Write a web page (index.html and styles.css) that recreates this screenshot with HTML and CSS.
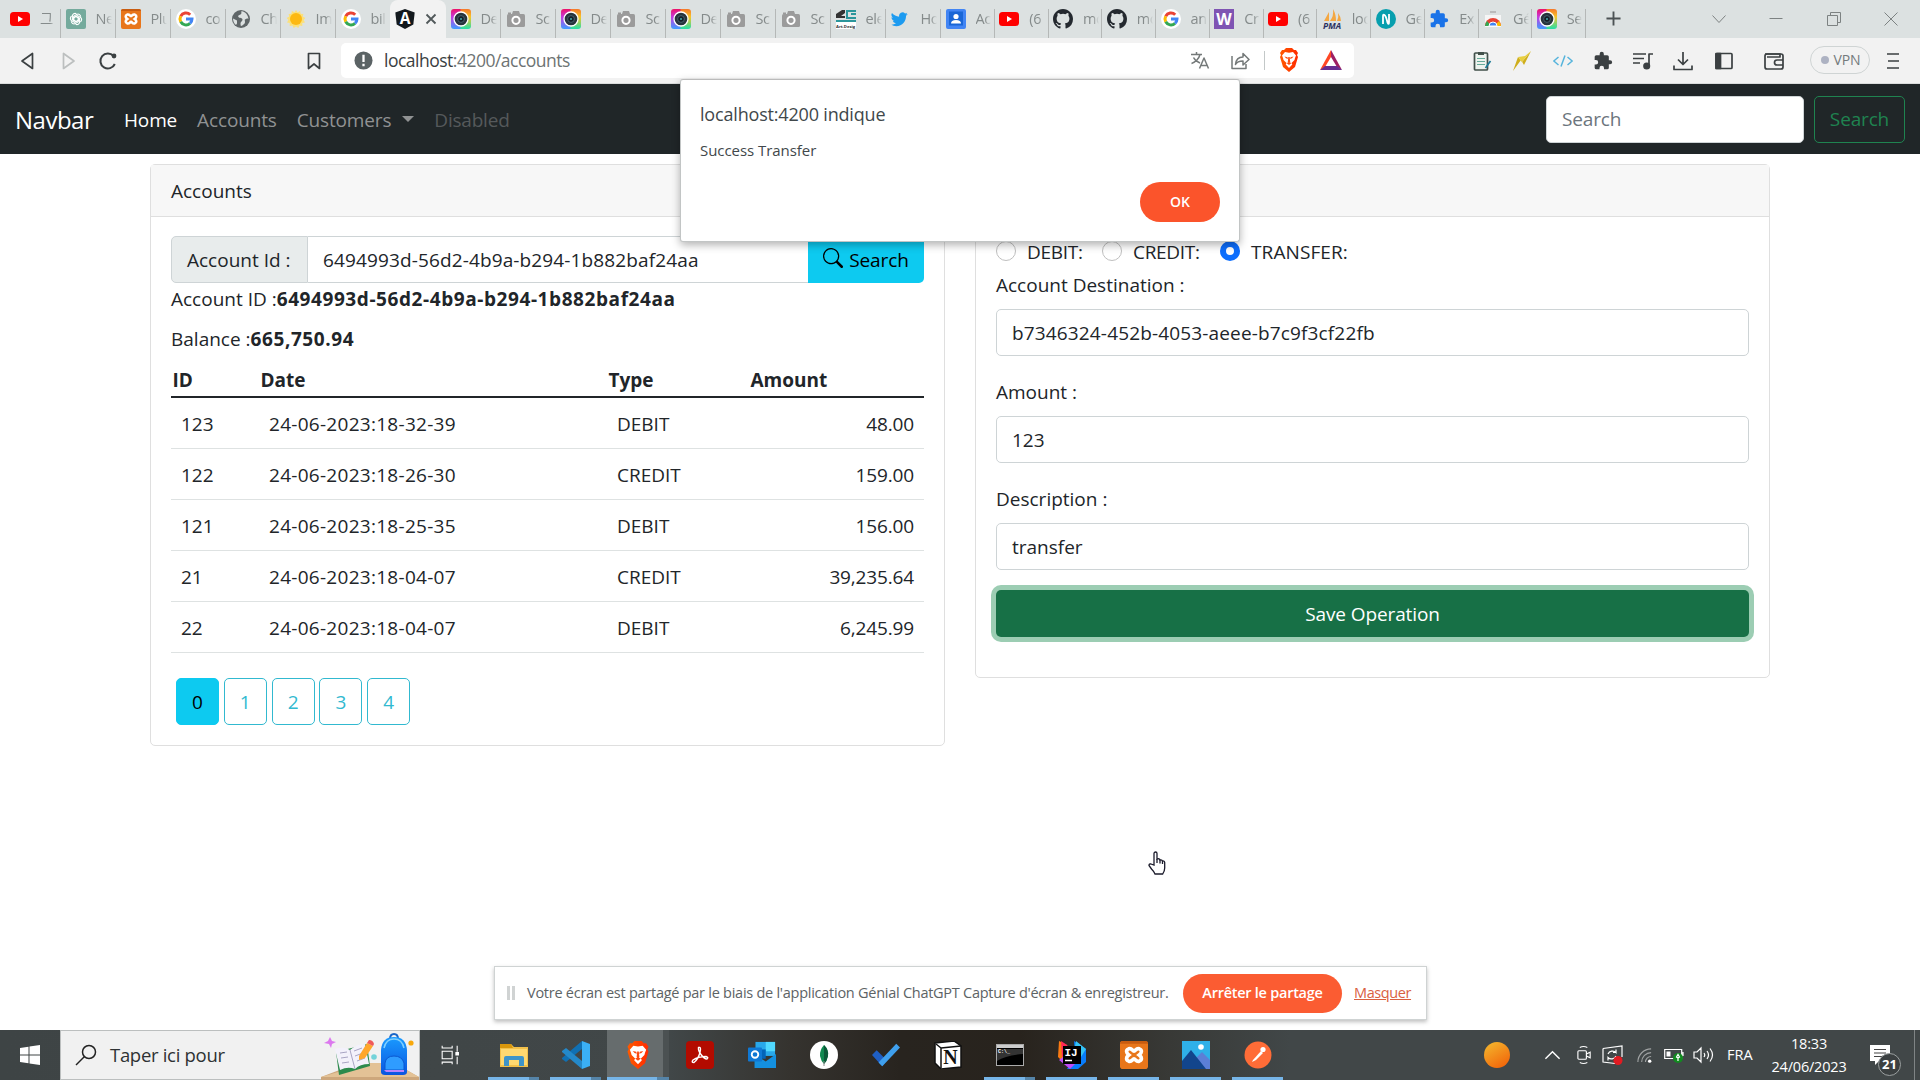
FILE: index.html
```html
<!DOCTYPE html>
<html lang="fr">
<head>
<meta charset="utf-8">
<title>Accounts</title>
<link rel="stylesheet" href="styles.css">
</head>
<body>
<svg class="defs" aria-hidden="true">
  <defs>
    <linearGradient id="rainbow" x1="0" y1="0" x2="0" y2="1"><stop offset="0" stop-color="#ee1166"/><stop offset=".4" stop-color="#c43be0"/><stop offset="1" stop-color="#3f9dff"/></linearGradient>
    <linearGradient id="rainbow2" x1="0" y1="0" x2="0" y2="1"><stop offset="0" stop-color="#f5782a"/><stop offset=".4" stop-color="#f7c52a"/><stop offset="1" stop-color="#22e0a8"/></linearGradient>
    <linearGradient id="sunset" x1="0" y1="0" x2=".6" y2="1"><stop offset="0" stop-color="#f3bb2f"/><stop offset="1" stop-color="#f26a0c"/></linearGradient>
    <linearGradient id="bag" x1="0" y1="0" x2="0" y2="1"><stop offset="0" stop-color="#1a9bff"/><stop offset="1" stop-color="#0a55e0"/></linearGradient>
    <linearGradient id="brave" x1="0" y1="0" x2="1" y2="0"><stop offset="0" stop-color="#ff5a00"/><stop offset="1" stop-color="#ff2a00"/></linearGradient>
    <symbol id="youtube" viewBox="0 0 20 20"><rect y="3" width="20" height="14" rx="3.5" fill="#f00"/><path d="M8 7l5 3-5 3z" fill="#fff"/></symbol>
    <symbol id="gpt" viewBox="0 0 20 20"><rect width="20" height="20" rx="2" fill="#74aa9c"/><g fill="none" stroke="#fff" stroke-width="1.1"><path id="petal" d="M10 7.400l2.300 1.300v4.100l-3 1.800a2.700 2.700 0 0 1-4-2.300"/><use href="#petal" transform="rotate(60 10 10)"/><use href="#petal" transform="rotate(120 10 10)"/><use href="#petal" transform="rotate(180 10 10)"/><use href="#petal" transform="rotate(240 10 10)"/><use href="#petal" transform="rotate(300 10 10)"/></g></symbol>
    <symbol id="xampp" viewBox="0 0 20 20"><rect width="20" height="20" rx="2" fill="#e8761b"/><path d="M0 2q0-2 2-2h16q2 0 2 2z" fill="#c85c10"/><path d="M6.200 5.600c2.400-.7 2.600 1.600 3.800 1.600s1.400-2.300 3.800-1.600c2.200.8 1.800 3-.1 4.400 1.900 1.400 2.300 3.600.1 4.400-2.400.7-2.600-1.600-3.800-1.600s-1.400 2.300-3.800 1.600c-2.200-.8-1.800-3 .1-4.400-1.900-1.400-2.300-3.600-.1-4.400z" fill="none" stroke="#fff" stroke-width="2.600"/></symbol>
    <symbol id="google" viewBox="0 0 20 20"><circle cx="10" cy="10" r="10" fill="#fff"/><g fill="none" stroke-width="3"><path d="M14.200 5.700A6 6 0 0 0 4.700 7.200" stroke="#ea4335"/><path d="M4.700 7.200a6 6 0 0 0 0 5.600" stroke="#fbbc05"/><path d="M4.700 12.800a6 6 0 0 0 9.300 1.600" stroke="#34a853"/><path d="M14 14.400a6 6 0 0 0 2-4.400h-6" stroke="#4285f4"/></g></symbol>
    <symbol id="globe" viewBox="0 0 20 20"><circle cx="10" cy="10" r="9" fill="#5f6668"/><path d="M10.500 2c-.5 2 .5 2.500-1 3.500s-3 1-2 2.500 4 .5 4 2.500-2 2-2 4 .5 2.500.5 2.500 4-1.500 4-4-1-2 1-3 2.500 0 2.500 0-.5-7-7-8zM2 9.500l4 2v3l-1 1.500c-2-1.500-3-4-3-6.500z" fill="#dce1e1"/></symbol>
    <symbol id="sun" viewBox="0 0 20 20"><path d="M10 1l1.600 2.200 2.500-1.200.5 2.700 2.800.2-.6 2.700 2.500 1.300L17.600 11l1.400 2.400-2.700.7v2.800l-2.700-.4-1.300 2.500L10 17.400 7.700 19l-1.300-2.500-2.700.4v-2.800L1 13.400 2.400 11 .7 8.900l2.500-1.300-.6-2.700 2.800-.2.500-2.700 2.500 1.200z" fill="#fbe07a"/><circle cx="10" cy="10" r="6" fill="#fdb913"/></symbol>
    <symbol id="angular" viewBox="0 0 20 20"><path d="M10 0l9.700 3.400-1.400 12.200L10 20l-8.300-4.400L.3 3.400z" fill="#12181d"/><text x="10" y="14.800" text-anchor="middle" class="logo-text" font-size="15.500" fill="#fff">A</text></symbol>
    <symbol id="shot" viewBox="0 0 20 20"><path d="M3 0h7v20H3q-3 0-3-3V3q0-3 3-3z" fill="url(#rainbow)"/><path d="M9.500 0H17q3 0 3 3v14q0 3-3 3H9.500z" fill="url(#rainbow2)"/><circle cx="10" cy="10" r="7" fill="#28343c" stroke="#fff" stroke-width="1.300"/><circle cx="10" cy="10" r="3.400" fill="#152028" stroke="#47606c"/><circle cx="10" cy="10" r="1" fill="#4aa"/></symbol>
    <symbol id="camera" viewBox="0 0 20 20"><rect x="1" y="5" width="18" height="13" rx="1.500" fill="#9b9b9b"/><path d="M6 5l1-3h6l1 3zM2 3.500h3V5H2z" fill="#9b9b9b"/><circle cx="10" cy="11.300" r="3.600" fill="#9b9b9b" stroke="#fff" stroke-width="2"/></symbol>
    <symbol id="design" viewBox="0 0 20 20"><path d="M0 13h20v7H0z" fill="#fff"/><path d="M0 5l6-4h3v3L5 7h4v2H0z" fill="#333"/><path d="M10 2h10M11 1v8h9M15 5h5M0 12h20" fill="none" stroke="#2b969b" stroke-width="2"/><text x="0" y="18.500" class="logo-text" font-size="4.200" fill="#333">Art.Desig</text></symbol>
    <symbol id="twitter" viewBox="0 0 24 24"><path d="M23.600 4.900a9.600 9.600 0 0 1-2.800.8 4.900 4.900 0 0 0 2.100-2.700 9.700 9.700 0 0 1-3.100 1.200 4.900 4.900 0 0 0-8.300 4.500A13.900 13.900 0 0 1 1.400 3.600a4.900 4.900 0 0 0 1.500 6.500 4.900 4.900 0 0 1-2.200-.6 4.900 4.900 0 0 0 3.900 4.900 4.900 4.900 0 0 1-2.200.1 4.900 4.900 0 0 0 4.600 3.400A9.800 9.800 0 0 1 0 19.900a13.900 13.900 0 0 0 7.500 2.200c9.100 0 14-7.500 13.700-14.600a10 10 0 0 0 2.400-2.600z" fill="#1d9bf0"/></symbol>
    <symbol id="contact" viewBox="0 0 20 20"><rect width="20" height="20" rx="2" fill="#4285f4"/><rect x="3" y="2.500" width="14" height="14" fill="#1a66d6"/><circle cx="10" cy="7.500" r="2.600" fill="#fff"/><path d="M5 14.500q0-3.500 5-3.500t5 3.500z" fill="#fff"/></symbol>
    <symbol id="github" viewBox="0 0 16 16"><path d="M8 0C3.580 0 0 3.580 0 8c0 3.540 2.290 6.530 5.470 7.590.4.070.55-.17.55-.38 0-.19-.01-.82-.01-1.490-2.010.37-2.530-.49-2.690-.94-.09-.23-.48-.94-.82-1.130-.28-.15-.68-.52-.01-.53.63-.01 1.080.58 1.230.82.720 1.210 1.870.87 2.330.66.070-.52.280-.87.510-1.070-1.780-.2-3.640-.89-3.640-3.950 0-.87.310-1.590.82-2.150-.08-.2-.36-1.020.08-2.120 0 0 .67-.21 2.200.82a7.500 7.500 0 0 1 4 0c1.530-1.040 2.200-.82 2.200-.82.440 1.100.16 1.920.08 2.120.51.560.82 1.270.82 2.150 0 3.070-1.870 3.750-3.650 3.950.29.250.54.730.54 1.480 0 1.070-.01 1.930-.01 2.200 0 .21.150.46.550.38A8 8 0 0 0 16 8c0-4.420-3.580-8-8-8z" fill="#24292f"/></symbol>
    <symbol id="wlogo" viewBox="0 0 20 20"><rect width="20" height="20" fill="#7f54b3"/><text x="10" y="15.500" text-anchor="middle" class="logo-text" font-size="16" fill="#fff">W</text></symbol>
    <symbol id="pma" viewBox="0 0 20 20"><path d="M2 12L7 3v9zM8 12q4-5 3-12 3 5 3 12zM15 12q2-4 1-8 3 4 3 8z" fill="#f4a742"/><text x="10" y="19.500" text-anchor="middle" class="logo-text italic" font-size="8.500" fill="#2b3060">PMA</text></symbol>
    <symbol id="nlogo" viewBox="0 0 20 20"><circle cx="10" cy="10" r="10" fill="#079fae"/><path d="M7 15V7q0-2 1.500-1t3 7.500q1.500 3 1.500-.5V5" fill="none" stroke="#fff" stroke-width="1.800"/></symbol>
    <symbol id="puzzle" viewBox="0 0 24 24"><path d="M20.500 11H19V7a2 2 0 0 0-2-2h-4V3.500a2.500 2.500 0 0 0-5 0V5H4a2 2 0 0 0-2 2v3.800h1.500a2.700 2.700 0 0 1 0 5.400H2V20a2 2 0 0 0 2 2h3.800v-1.500a2.700 2.700 0 0 1 5.400 0V22H17a2 2 0 0 0 2-2v-4h1.500a2.500 2.500 0 0 0 0-5z" fill="currentColor"/></symbol>
    <symbol id="store" viewBox="0 0 20 20"><path d="M7 2h6v2H7z" fill="#bbb"/><path d="M2 6h16v12H2z" fill="#f6f6f6"/><path d="M2 17a8 8 0 0 1 16 0z" fill="#e84335"/><path d="M2 17a8 8 0 0 1 2-5l4 5z" fill="#34a853"/><path d="M18 17a8 8 0 0 0-2-5l-5 5z" fill="#fbbc05"/><path d="M6 17a4 4 0 0 1 8 0z" fill="#4285f4" stroke="#fff"/></symbol>
    <symbol id="lion" viewBox="0 0 20 24"><path d="M5 2l2-2h6l2 2h2l2 3-1 2 1 2-3 10-6 5-6-5L1 9l1-2-1-2 2-3z" fill="url(#brave)"/><path d="M6 4l4 .8L14 4l3 3.600-1 2.400-.5 2-3 3 .8 1.500L10 20l-3.300-3.500.8-1.500-3-3-.5-2-1-2.400z" fill="#fff"/><path d="M5.500 8.500l3 .8.500 1.700-2-.7zM14.500 8.500l-3 .8-.5 1.700 2-.7zM9.300 9h1.400l.5 5-1.200.8-1.200-.8zM7.500 15l2.500-.8 2.500.8-2.500 2z" fill="#fb4a10"/></symbol>
  </defs>
</svg>

<div class="tabs">
  <div class="tab first"><svg class="fav"><use href="#youtube"/></svg><span>그</span></div>
  <div class="tab"><svg class="fav"><use href="#gpt"/></svg><span>Ne</span></div>
  <div class="tab"><svg class="fav"><use href="#xampp"/></svg><span>Plu</span></div>
  <div class="tab"><svg class="fav"><use href="#google"/></svg><span>co</span></div>
  <div class="tab"><svg class="fav"><use href="#globe"/></svg><span>Ch</span></div>
  <div class="tab"><svg class="fav"><use href="#sun"/></svg><span>Im</span></div>
  <div class="tab last"><svg class="fav"><use href="#google"/></svg><span>bil</span></div>
  <div class="tab active"><svg class="fav"><use href="#angular"/></svg><svg class="close" viewBox="0 0 12 12"><path d="M1.500 1.500l9 9M10.500 1.500l-9 9"/></svg></div>
  <div class="tab"><svg class="fav"><use href="#shot"/></svg><span>De</span></div>
  <div class="tab"><svg class="fav"><use href="#camera"/></svg><span>Sc</span></div>
  <div class="tab"><svg class="fav"><use href="#shot"/></svg><span>De</span></div>
  <div class="tab"><svg class="fav"><use href="#camera"/></svg><span>Sc</span></div>
  <div class="tab"><svg class="fav"><use href="#shot"/></svg><span>De</span></div>
  <div class="tab"><svg class="fav"><use href="#camera"/></svg><span>Sc</span></div>
  <div class="tab"><svg class="fav"><use href="#camera"/></svg><span>Sc</span></div>
  <div class="tab"><svg class="fav"><use href="#design"/></svg><span>ele</span></div>
  <div class="tab"><svg class="fav small"><use href="#twitter"/></svg><span>Ho</span></div>
  <div class="tab narrow"><svg class="fav"><use href="#contact"/></svg><span>Ac</span></div>
  <div class="tab narrow"><svg class="fav"><use href="#youtube"/></svg><span>(6</span></div>
  <div class="tab narrow"><svg class="fav"><use href="#github"/></svg><span>mo</span></div>
  <div class="tab narrow"><svg class="fav"><use href="#github"/></svg><span>mo</span></div>
  <div class="tab narrow"><svg class="fav"><use href="#google"/></svg><span>an</span></div>
  <div class="tab narrow"><svg class="fav"><use href="#wlogo"/></svg><span>Cr</span></div>
  <div class="tab narrow"><svg class="fav"><use href="#youtube"/></svg><span>(6</span></div>
  <div class="tab narrow"><svg class="fav"><use href="#pma"/></svg><span>loc</span></div>
  <div class="tab narrow"><svg class="fav"><use href="#nlogo"/></svg><span>Ge</span></div>
  <div class="tab narrow"><svg class="fav blue"><use href="#puzzle"/></svg><span>Ex</span></div>
  <div class="tab narrow"><svg class="fav"><use href="#store"/></svg><span>Gé</span></div>
  <div class="tab narrow"><svg class="fav"><use href="#shot"/></svg><span>Se</span></div>
  <svg class="plus" viewBox="0 0 16 16"><path d="M8 .5v15M.5 8h15"/></svg>
  <div class="window-buttons">
    <svg viewBox="0 0 14 14"><path d="M.5 3.500L7 10.500l6.500-7"/></svg>
    <svg viewBox="0 0 14 14"><path d="M.5 6.500h13"/></svg>
    <svg viewBox="0 0 14 14"><path d="M.5 3.500h10v10H.5zM3.500 3.500v-3h10v10h-3"/></svg>
    <svg viewBox="0 0 14 14"><path d="M.5.500l13 13M13.500.500l-13 13"/></svg>
  </div>
</div>

<div class="toolbar">
  <svg class="ico back" viewBox="0 0 20 20"><path d="M14.500 2.500v15L4 10z"/></svg>
  <svg class="ico forward" viewBox="0 0 20 20"><path d="M5.500 2.500v15L16 10z"/></svg>
  <svg class="ico reload" viewBox="0 0 20 20"><path d="M16.800 13A7.500 7.500 0 1 1 15.500 5"/><circle cx="16" cy="5" r="2.400" class="solid" stroke="none"/></svg>
  <svg class="ico bookmark" viewBox="0 0 20 20"><path d="M4.500 2.500h11v15L10 13l-5.500 4.500z"/></svg>
  <div class="address">
    <svg class="info" viewBox="0 0 20 20"><circle cx="10" cy="10" r="9.500"/><path d="M10 4v7.500M10 13.500v2.500"/></svg>
    <span class="url"><b>localhost</b>:4200/accounts</span>
    <div class="address-tools">
      <svg class="ico thin" viewBox="0 0 20 20"><path d="M1 4.500h11M6.500 2v2.500M3.500 7.500c1.500 3 4 4.500 6.500 5.500M10 4.500C9 9 5 12.500 1.500 13.500M9.500 18.500L14 8l4.500 10.500M11 15.500h6"/></svg>
      <svg class="ico thin" viewBox="0 0 20 20"><path d="M2 6v12.500h14V14M5.500 14.500C6 9 9 7 13 7V3.500l6 6-6 5.500v-4c-4 0-6 .5-7.500 3.500z"/></svg>
      <i class="bar"></i>
      <svg class="lion"><use href="#lion"/></svg>
      <svg class="bat" viewBox="0 0 22 20"><path d="M11 0L0 20l5-3 6-10z" fill="#ff4724"/><path d="M11 0l11 20-5-3-6-10z" fill="#9e1f63"/><path d="M0 20h22l-5-4H5z" fill="#662d91"/></svg>
    </div>
  </div>
  <div class="extensions">
    <svg class="ico" viewBox="0 0 20 20"><rect x="2.500" y="2" width="13" height="17" rx="1" fill="#edf3ee" stroke="#41504a"/><path d="M6 1h6v3H6z" fill="#41504a" stroke="none"/><path d="M5 7.500h8M5 10.500h8M5 13.500h8" stroke="#6a9" stroke-width="1.200"/><path d="M18.500 10l-5 7" stroke="#1c7a96"/></svg>
    <svg class="ico" viewBox="0 0 20 20"><path d="M19 0L12 14l-3-5-8 11L6 6l4 5z" fill="#cfae1c" stroke="none"/><path d="M19 0L10 11 6 6 13 5z" fill="#e8cf40" stroke="none"/></svg>
    <svg class="ico code" viewBox="0 0 20 20"><path d="M5.500 6L.8 10l4.700 4M14.500 6l4.700 4-4.700 4M12 4.500l-4 11"/></svg>
    <svg class="ico dark"><use href="#puzzle"/></svg>
    <svg class="ico" viewBox="0 0 20 20"><path d="M0 3h13M0 7.500h11M0 12h7M16 15V3h4"/><circle cx="13.700" cy="15" r="2.700" class="solid"/></svg>
    <svg class="ico" viewBox="0 0 20 20"><path d="M10 1v12M5 8.500l5 5 5-5M1 14.500v4h18v-4"/></svg>
    <svg class="ico" viewBox="0 0 20 20"><rect x="2" y="2.500" width="16" height="15" rx="1"/><path d="M2 2.500h4.500v15H2z" class="solid"/></svg>
    <svg class="ico wallet" viewBox="0 0 20 20"><rect x="1" y="3" width="18" height="15" rx="2"/><path d="M1 3h15v3H3M19 9h-6a2.500 2.500 0 0 0 0 5h6"/></svg>
    <div class="vpn"><i></i>VPN</div>
    <svg class="ico menu" viewBox="0 0 14 18"><path d="M1 2h12M2 9h11M1 16h12"/></svg>
  </div>
</div>

<nav class="navbar">
  <a class="brand">Navbar</a>
  <a class="link current">Home</a>
  <a class="link">Accounts</a>
  <a class="link dropdown">Customers</a>
  <a class="link disabled">Disabled</a>
  <div class="nav-search"><div class="control">Search</div><div class="outline">Search</div></div>
</nav>

<main class="content">
  <section class="card">
    <header class="card-header">Accounts</header>
    <div class="card-body">
      <div class="group">
        <span class="prefix">Account Id :</span>
        <span class="value">6494993d-56d2-4b9a-b294-1b882baf24aa</span>
        <button class="search"><svg viewBox="0 0 16 16"><path d="M11.742 10.344a6.500 6.500 0 1 0-1.397 1.398h-.001c.03.04.062.078.098.115l3.850 3.850a1 1 0 0 0 1.415-1.414l-3.850-3.850a1 1 0 0 0-.115-.1zM12 6.500a5.500 5.500 0 1 1-11 0 5.500 5.500 0 0 1 11 0z"/></svg><span>Search</span></button>
      </div>
      <p class="info-line">Account ID :<b>6494993d-56d2-4b9a-b294-1b882baf24aa</b></p>
      <p class="info-line">Balance :<b>665,750.94</b></p>
      <table class="operations">
        <colgroup><col class="c-id"><col class="c-date"><col class="c-type"><col class="c-amount"></colgroup>
        <thead><tr><th>ID</th><th>Date</th><th>Type</th><th>Amount</th></tr></thead>
        <tbody>
          <tr><td>123</td><td>24-06-2023:18-32-39</td><td>DEBIT</td><td>48.00</td></tr>
          <tr><td>122</td><td>24-06-2023:18-26-30</td><td>CREDIT</td><td>159.00</td></tr>
          <tr><td>121</td><td>24-06-2023:18-25-35</td><td>DEBIT</td><td>156.00</td></tr>
          <tr><td>21</td><td>24-06-2023:18-04-07</td><td>CREDIT</td><td>39,235.64</td></tr>
          <tr><td>22</td><td>24-06-2023:18-04-07</td><td>DEBIT</td><td>6,245.99</td></tr>
        </tbody>
      </table>
      <div class="pages"><a class="on">0</a><a>1</a><a>2</a><a>3</a><a>4</a></div>
    </div>
  </section>

  <section class="card">
    <header class="card-header"></header>
    <div class="card-body">
      <div class="radios">
        <label><i></i><span>DEBIT:</span></label>
        <label><i></i><span>CREDIT:</span></label>
        <label><i class="checked"></i><span>TRANSFER:</span></label>
      </div>
      <div class="field"><label>Account Destination :</label><div class="control uuid">b7346324-452b-4053-aeee-b7c9f3cf22fb</div></div>
      <div class="field"><label>Amount :</label><div class="control">123</div></div>
      <div class="field"><label>Description :</label><div class="control">transfer</div></div>
      <button class="save">Save Operation</button>
    </div>
  </section>
</main>

<footer class="taskbar">
  <svg class="start" viewBox="0 0 20 20"><path d="M0 3l8.500-1.200v7.700H0zM9.500 1.600L20 0v9.500H9.500zM0 10.500h8.500v7.700L0 17zM9.500 10.500H20V20L9.500 18.400z" fill="#fff"/></svg>
  <div class="taskbar-search">
    <svg class="glass" viewBox="0 0 22 22"><circle cx="14" cy="8" r="6.500"/><path d="M9.500 12.500L1 21"/></svg>
    <span>Taper ici pour</span>
    <svg class="school" viewBox="0 0 98 50">
      <path d="M0 47l37-14h36l25 14v3H0z" fill="#cda77c"/><path d="M0 47l48-14h25l25 14z" fill="#e3c296"/>
      <path d="M9 7l2 4 4 1-4 2-1 4-2-4-5-1 4-2z" fill="#dc78ee"/>
      <path d="M15 22l31-8 3 22-31 9z" fill="#2c8a4c"/><path d="M14 19q9-3 15 1 6-6 15-6l4 20q-9 0-14 5-7-3-15 1z" fill="#f3f1fb"/><path d="M29 20l5 19M19 23l7-1M20 28l7-1M21 33l7-1M33 21l8-3M34 26l8-3M36 31l8-3" stroke="#a9a5c4" fill="none"/>
      <path d="M38 26l8-13 6 3-8 12-6 2z" fill="#ffa62b"/><path d="M46 13l2-3q4 0 5 4l-1 2z" fill="#ef5a5a"/>
      <circle cx="53" cy="27" r="2.800" fill="#74d3da"/><circle cx="90" cy="13" r="2.600" fill="#f8a80b"/>
      <path d="M69 9q0-5 4-5t4 5" fill="none" stroke="#1a66c8" stroke-width="2"/><path d="M60 42V20Q61 7 73 7t13 13v22q0 3-4 3H64q-4 0-4-3z" fill="url(#bag)"/><path d="M63 18q2-9 10-9t10 9" stroke="#7fd0ff" stroke-width="1.500" fill="none"/><path d="M64 40v-7q1-7 9-7t10 7v7z" fill="#2f9cff" stroke="#0b58d0"/><path d="M63 40h20v2H65z" fill="#b884ff"/>
    </svg>
  </div>
  <div class="apps">
    <div class="app"><svg class="taskview" viewBox="0 0 22 24"><path d="M1 1v2.500h12V1M1 23v-2.500h12V23M1 7.500h12v9H1zM19 1v7M19 14v9"/><path d="M17.500 9h3v3h-3z" fill="#fff"/></svg></div>
    <div class="app open multi"><svg viewBox="0 0 28 28"><path d="M0 3h11l3 3h14v20H0z" fill="#f2c04a"/><path d="M0 3h11l2 4H0z" fill="#d9960b"/><path d="M1 8h26v16H1z" fill="#ffd870"/><path d="M4 25v-8q0-2 2-2h16q2 0 2 2v8h-5v-6H9v6z" fill="#3f94c8"/></svg></div>
    <div class="app open multi"><svg viewBox="0 0 28 28"><path d="M20 0v8L4 21l-4-3v-1z" fill="#1070b3"/><path d="M0 10l4-3 16 13v8L0 11z" fill="#2489ca"/><path d="M20 0l8 3v22l-8 3z" fill="#3bb0f5"/></svg></div>
    <div class="app open focused multi"><svg viewBox="0 0 28 28"><use href="#lion" x="2" y="0" width="24" height="28"/></svg></div>
    <div class="app"><svg viewBox="0 0 28 28"><rect width="28" height="28" rx="4" fill="#b30b00"/><path d="M12.500 6.500q3-1 1.500 5-2 7-6 10-3 0-1-2.500 5-3.500 13-3.500 3 1 1 2.500-3 0-6-4.500-3-4-2.500-7z" fill="none" stroke="#fff" stroke-width="1.400"/></svg></div>
    <div class="app"><svg viewBox="0 0 30 28"><path d="M8 0h21v15H8z" fill="#28a8ea"/><path d="M19 0h10v10H19z" fill="#50d9ff"/><path d="M8 8h11v10H8z" fill="#0364b8"/><path d="M7 13l12 8 11-8v15H7z" fill="#1490df"/><rect y="6" width="15" height="15" rx="1" fill="#0f78d4"/><circle cx="7.500" cy="13.500" r="3.500" fill="none" stroke="#fff" stroke-width="2"/></svg></div>
    <div class="app"><svg viewBox="0 0 28 28"><circle cx="14" cy="14" r="14" fill="#fff"/><path d="M14 4q5 5 4 11-1 5-4 8-3-3-4-8-.5-6 4-11z" fill="#0f8a50"/><path d="M14 4q5 5 4 11-1 5-4 8z" fill="#0a5a38"/><path d="M14 20v5" stroke="#888"/></svg></div>
    <div class="app"><svg viewBox="0 0 30 28"><path d="M0 14l5-5 11 11-5 6z" fill="#1f5fc4"/><path d="M11 26L30 6l-4-4-19 20z" fill="#3fa0ee"/></svg></div>
    <div class="app"><svg viewBox="0 0 28 28"><path d="M1 2l19-2 7 5v21l-20 2-6-6z" fill="#fff" stroke="#111" stroke-width="1.500"/><path d="M2 3l5 4v20M7 7l20-2" stroke="#111" stroke-width="1.500" fill="none"/><text x="16.500" y="23" text-anchor="middle" class="serif-mark" font-size="20" fill="#111">N</text></svg></div>
    <div class="app open multi"><svg viewBox="0 0 28 28"><rect x=".5" y="3.500" width="27" height="21" fill="#000" stroke="#aaa"/><path d="M1 4h26v3H1z" fill="#ccc"/><path d="M1 8h26v5Q10 14 1 20z" fill="#333"/><text x="2" y="12" class="mono-mark" font-size="5" fill="#fff">C:\_</text></svg></div>
    <div class="app open"><svg viewBox="0 0 28 28"><path d="M1 0l8 4-3 18-6-6z" fill="#f97a12"/><path d="M3 0l6 4 3 4-8 8z" fill="#fe2857"/><path d="M16 0l12 8v13l-8 7H9l8-13z" fill="#087cfa"/><path d="M1 19l11 9 5-5-12-7z" fill="#c04af7"/><path d="M18 0l10 8-5 8-6-11z" fill="#35c3f4"/><rect x="5" y="5" width="18" height="18" fill="#000"/><text x="6.500" y="14.500" class="mono-mark" font-size="11" fill="#fff">IJ</text><path d="M7 19.500h7" stroke="#fff" stroke-width="1.500"/></svg></div>
    <div class="app open"><svg viewBox="0 0 28 28"><use href="#xampp" width="28" height="28"/></svg></div>
    <div class="app open"><svg viewBox="0 0 28 28"><path d="M0 0h28v28H0z" fill="#2fb0e8"/><path d="M14 17l6-6 8 8v9H14z" fill="#5c7fd6"/><path d="M0 20L9 9l15 19H0z" fill="#12458c"/><circle cx="19" cy="6" r="2.800" fill="#fff"/></svg></div>
    <div class="app open"><svg viewBox="0 0 28 28"><circle cx="14" cy="14" r="13.500" fill="#ff6c37"/><path d="M8 21l1-2 8-9 2 2-7 7z" fill="#fff"/><circle cx="19" cy="8.500" r="2.600" fill="#fff"/></svg></div>
  </div>
  <div class="tray">
    <svg class="weather" viewBox="0 0 26 26"><circle cx="13" cy="13" r="13" fill="url(#sunset)"/></svg>
    <svg class="chevron" viewBox="0 0 18 12"><path d="M1.500 10L9 2.500l7.500 7.500"/></svg>
    <svg class="t-cam" viewBox="0 0 18 20"><rect x="2" y="5.500" width="9" height="9" rx="1"/><path d="M11 9l4-2v6l-4-2M4 2q4-2 8 0M4 18q4 2 8 0"/></svg>
    <svg class="t-update" viewBox="0 0 22 20"><path d="M1 3.500L20 1v11M1 3.500V17l12 1.500M6 9a5 5 0 0 1 8-1.500V4.500M14 7.500h-3M14 11a5 5 0 0 1-8 1.500V15.500"/><circle cx="16" cy="15.500" r="4.500" fill="#e11b22" stroke="none"/></svg>
    <svg class="t-wifi" viewBox="0 0 18 18"><g class="dim"><path d="M2 16A14 14 0 0 1 16 2M6 16A10 10 0 0 1 16 6M10 16a6 6 0 0 1 6-6"/></g><circle cx="14.500" cy="15" r="1.800" fill="#fff" stroke="none"/></svg>
    <svg class="t-battery" viewBox="0 0 20 16"><path d="M.7 2.500h17v9H.7zM19 5v4"/><path d="M2.500 4.500h4v5h-4z" fill="#fff" stroke="none"/><circle cx="14" cy="11" r="5" fill="#128a20" stroke="none"/><path d="M14 14v-3l-1.500-1L14 7.500l1.500 2.500-1.500 1"/></svg>
    <svg class="t-volume" viewBox="0 0 22 18"><path d="M1 6h3l4-4v14l-4-4H1zM11 7q1.500 2 0 4M14 5q3 4 0 8M17 2.500q5 6.500 0 13"/></svg>
    <span class="lang">FRA</span>
    <div class="clock"><span>18:33</span><span>24/06/2023</span></div>
    <div class="notify"><svg viewBox="0 0 20 20"><path d="M0 0h20v16H9l-4 4v-4H0z" fill="#fff"/><path d="M4 4.500h12M4 8h12M4 11.500h12" stroke="#444"/></svg><b>21</b></div>
    <i class="desktop-edge"></i>
  </div>
</footer>

<div class="alert" role="dialog">
  <h1>localhost:4200 indique</h1>
  <p>Success Transfer</p>
  <button>OK</button>
</div>

<div class="share">
  <i class="grip"></i>
  <span class="share-text">Votre écran est partagé par le biais de l'application Génial ChatGPT Capture d'écran &amp; enregistreur.</span>
  <button>Arrêter le partage</button>
  <a>Masquer</a>
</div>

<svg class="cursor" viewBox="0 0 18 24"><path d="M6 14V2.500a1.500 1.500 0 0 1 3 0V8q2.500-.8 3 1 2-.5 2.500 1 2-.3 2.200 1.500V17q0 3-2 6H7q-1-2.500-3.500-5L1 14.500q0-2 2-1.500z"/><path d="M9 8v4M12 9v3.500M14.500 10v3"/></svg>
</body>
</html>
```
FILE: styles.css
```css
* { box-sizing: border-box; }
body { margin: 0; width: 1920px; height: 1080px; overflow: hidden; display: flex; flex-direction: column; background: #fff; color: #212529; font-family: "Open Sans", "Noto Sans", "Noto Sans CJK KR", sans-serif; font-size: 19px; line-height: 30px; }
button { font: inherit; letter-spacing: inherit; border: 0; padding: 0; }
p { margin: 0; }
svg { flex: none; display: block; }
.defs { width: 0; height: 0; position: absolute; }
.logo-text { font-family: "Open Sans", sans-serif; font-weight: 700; }
.italic { font-style: italic; }
.serif-mark { font-family: "Liberation Serif", serif; font-weight: 700; }
.mono-mark { font-family: "Liberation Mono", monospace; font-weight: 700; }

/* Tab strip */
.tabs { height: 38px; flex: none; display: flex; align-items: flex-start; background: #dce1e1; }
.tab { width: 55px; height: 38px; flex: none; display: flex; align-items: flex-start; padding: 9px 4px 0 4.5px; position: relative; }
.tab::after { content: ""; position: absolute; right: 0; top: 9px; bottom: 0; width: 1px; background: #b5b8b7; }
.tab.first { width: 61px; padding-left: 10px; }
.tab.last { width: 54px; }
.tab.active { width: 56px; background: #f2f2f2; border-radius: 8px 8px 0 0; padding-left: 5px; }
.tab.active::after, .tab.last::after { display: none; }
.tab.narrow { width: 53.75px; }
.tab span { margin-left: 10px; width: 16px; height: 20px; line-height: 20px; white-space: nowrap; font-size: 14.5px; letter-spacing: -.4px; color: #858b8b; -webkit-mask-image: linear-gradient(90deg, #000 60%, transparent); mask-image: linear-gradient(90deg, #000 60%, transparent); }
.fav { width: 20px; height: 20px; }
.fav.small { width: 17px; margin-right: 3px; }
.blue { color: #1a73e8; }
.close { width: 12px; height: 12px; margin: 4px 0 0 10px; fill: none; stroke: #51585a; stroke-width: 1.8; }
.plus { width: 15px; height: 15px; margin: 11px 0 0 20px; fill: none; stroke: #4c5254; stroke-width: 2; }
.window-buttons { margin: 12px 22px 0 auto; display: flex; gap: 43.5px; }
.window-buttons svg { width: 14px; height: 14px; fill: none; stroke: #7d8282; stroke-width: 1; }

/* Browser toolbar */
.toolbar { height: 46px; flex: none; display: flex; align-items: center; background: #f2f2f2; border-bottom: 1px solid #dadcdc; }
.ico { width: 20px; height: 20px; fill: none; stroke: #3b4042; stroke-width: 1.7; stroke-linejoin: round; }
.solid { fill: #3b4042; }
.back { margin-left: 18px; }
.forward { margin-left: 20px; stroke: #bcbfbf; }
.reload { margin-left: 20px; stroke-width: 2; }
.bookmark { margin-left: 186px; }
.address { width: 1013px; height: 35px; margin: -1px 0 0 17px; display: flex; align-items: center; background: #fff; border-radius: 5px; padding: 0 12px 0 13px; }
.info { width: 19px; height: 19px; fill: #5b6365; }
.info path { stroke: #fff; stroke-width: 2.4; }
.url { margin-left: 11px; font-size: 17.5px; letter-spacing: -.5px; color: #6d7373; }
.url b { font-weight: 400; color: #3a4041; }
.address-tools { margin-left: auto; display: flex; align-items: center; }
.thin { stroke: #747979; stroke-width: 1.5; }
.thin + .thin { margin-left: 20px; }
.bar { width: 1px; height: 19px; background: #c3c8c8; margin: 0 14px; }
.lion { width: 20px; height: 24px; }
.bat { width: 22px; height: 20px; margin-left: 21px; }
.extensions { margin-left: 118px; display: flex; align-items: center; gap: 20.3px; }
.code { stroke: #56b4dc; stroke-width: 1.5; }
.dark { color: #3b4042; stroke: none; }
.wallet { margin-left: 10px; }
.vpn { width: 60px; height: 28px; margin: -1px 0 0 6px; display: flex; align-items: center; justify-content: center; gap: 5px; border: 1px solid #cfd4d4; border-radius: 14px; font-size: 14px; letter-spacing: -.2px; color: #747a7c; }
.vpn i { width: 8px; height: 8px; border-radius: 50%; background: #adb2c2; }
.menu { width: 14px; height: 18px; margin-left: -5px; }

/* Site navigation */
.navbar { height: 70px; flex: none; display: flex; align-items: center; padding: 2px 15px 0 15px; background: #202628; color: #909293; letter-spacing: -.15px; }
.brand { font-size: 24px; letter-spacing: -.5px; color: #fff; width: 109px; }
.link { margin-right: 20px; }
.current { color: #fff; }
.dropdown { display: flex; align-items: center; }
.dropdown::after { content: ""; border: 6px solid transparent; border-top-color: #909293; border-bottom: 0; margin: -3px 0 0 11px; }
.disabled { color: #55595b; letter-spacing: -.2px; }
.nav-search { margin: -1px 0 0 auto; display: flex; gap: 10px; }
.nav-search .control { width: 258px; line-height: 45px; color: #6c757d; }
.outline { width: 91px; height: 47px; line-height: 45px; text-align: center; border: 1px solid #1f8350; border-radius: 5px; color: #1f8350; }
.control { height: 47px; line-height: 46px; padding: 0 15px; background: #fff; border: 1px solid #ced4d6; border-radius: 5px; }

/* Cards */
.content { flex: 1; display: flex; align-items: flex-start; gap: 30px; padding: 10px 150px 0; }
.card { width: 795px; flex: none; border: 1px solid #dfdfdf; border-radius: 5px; }
.card-header { height: 52px; padding: 11px 20px; background: #f7f7f7; border-bottom: 1px solid #dfdfdf; }
.card-body { padding: 19px 20px 20px; }
.group { display: flex; height: 47px; line-height: 47px; }
.prefix { width: 137px; padding-left: 15px; background: #e8ecec; border: 1px solid #ced4d6; border-radius: 5px 0 0 5px; }
.value { width: 500px; padding-left: 15px; border: solid #ced4d6; border-width: 1px 0; letter-spacing: .13px; }
.search { width: 116px; display: flex; align-items: center; justify-content: center; gap: 6px; background: #0dcaf0; color: #000; border-radius: 0 5px 5px 0; letter-spacing: -.1px; }
.search svg { width: 20px; height: 20px; margin-top: -3px; }
.search span { padding-top: 1px; }
.info-line { margin: 1px 0 9px; }
.info-line + .info-line { margin: 10px 0 10px; }
.info-line b { letter-spacing: .58px; }
.operations { width: 753px; table-layout: fixed; border-collapse: separate; border-spacing: 0; }
.c-id { width: 88px; } .c-date { width: 348px; } .c-type { width: 142px; } .c-amount { width: 175px; }
th { height: 34px; padding: 0 1.5px; line-height: 31px; text-align: left; border-bottom: 2px solid #212529; }
td { height: 51px; padding: 2px 10px 0; line-height: 48px; border-bottom: 1px solid #dee2e2; }
td:nth-child(2) { letter-spacing: .28px; }
td:last-child { text-align: right; letter-spacing: -.15px; }
.pages { display: flex; gap: 4.8px; margin: 25px 0 0 5px; }
.pages a { width: 43px; height: 47px; line-height: 46px; text-align: center; border: 1px solid #31b9d0; border-radius: 5px; color: #31b9d0; }
.pages .on { background: #0dcaf0; border-color: #0dcaf0; color: #000; }
.radios { display: flex; height: 30px; }
.radios label { display: flex; align-items: center; width: 106px; flex: none; letter-spacing: -.3px; }
.radios label + label { width: 118px; }
.radios label + label + label { letter-spacing: .1px; }
.radios span { padding-top: 1px; }
.radios i { flex: none; width: 20px; height: 20px; margin-right: 11px; border: 1px solid #bfbfbf; border-radius: 50%; }
.radios .checked { border: 6px solid #0d6efd; }
.field { margin-bottom: 21px; }
.radios + .field { margin-top: 4px; }
.field label { display: block; margin-bottom: 9px; }
.uuid { letter-spacing: .15px; }
.save { width: 753px; height: 47px; display: block; margin: -1px 0 20px; border-radius: 5px; background: #177046; color: #fff; box-shadow: 0 0 0 5px #9ccdb3; letter-spacing: -.1px; }

/* Windows taskbar */
.taskbar { height: 50px; flex: none; display: flex; align-items: center; color: #fff; background: linear-gradient(90deg, #3e4445 0, #414748 670px, #35332f 790px, #28241f 900px, #28231d 1020px, #383936 1170px, #414748 1290px, #414748 100%); }
.start { width: 20px; height: 20px; margin-left: 20px; }
.taskbar-search { width: 360px; height: 50px; margin-left: 20px; display: flex; align-items: center; background: #f1f1f1; border: 1px solid #bcbfbf; color: #2e3233; }
.glass { width: 22px; height: 22px; margin-left: 14px; fill: none; stroke: #222; stroke-width: 1.5; }
.taskbar-search span { margin-left: 13px; width: 212px; font-size: 18.5px; letter-spacing: -.3px; }
.school { width: 98px; height: 50px; }
.apps { display: flex; }
.app { width: 62px; height: 50px; flex: none; display: flex; align-items: center; justify-content: center; position: relative; }
.app svg { width: 28px; height: 28px; }
.app:first-child { width: 63px; padding-right: 2px; }
.app .taskview { width: 21px; height: 20px; fill: none; stroke: #fff; stroke-width: 1.3; }
.open::after { content: ""; position: absolute; left: 5px; right: 6px; bottom: 0; height: 3px; background: #76b5e8; }
.multi::after { background: linear-gradient(90deg, #76b5e8 80%, #5584a8 80%); }
.focused { background: linear-gradient(90deg, #666c6d 56px, #4b5152 56px); }
.focused::after { left: 0; right: 0; }
.tray { margin-left: auto; height: 50px; display: flex; align-items: center; }
.tray svg { fill: none; stroke: #fff; stroke-width: 1.2; }
.tray .weather { width: 26px; height: 26px; stroke: none; margin-right: 34px; }
.tray .chevron { width: 17px; height: 12px; margin-right: 15px; stroke-width: 1.5; }
.t-cam { width: 17px; height: 20px; margin-right: 9px; }
.t-update { width: 22px; height: 20px; margin-right: 12px; }
.t-wifi { width: 17px; height: 17px; margin-right: 11px; }
.dim { opacity: .5; }
.t-battery { width: 20px; height: 16px; margin-right: 9px; }
.t-volume { width: 22px; height: 18px; margin-right: 12px; }
.lang { width: 43px; font-size: 14.5px; }
.clock { width: 78px; display: flex; flex-direction: column; align-items: center; font-size: 14.5px; line-height: 23px; letter-spacing: -.2px; }
.notify { position: relative; margin-left: 22px; width: 20px; height: 20px; }
.notify svg { width: 20px; height: 20px; stroke: none; }
.notify b { position: absolute; left: 8px; top: 8px; width: 23px; height: 23px; border: 1px solid #9ba0a0; border-radius: 50%; background: #3b4041; font-size: 13px; line-height: 20px; text-align: center; }
.desktop-edge { width: 1px; height: 50px; background: #7f8485; margin: 0 5px 0 24px; }

/* Browser dialog */
.alert { position: absolute; left: 680px; top: 79px; width: 560px; height: 163px; padding: 19px; background: #fff; border: 1px solid #c2c5c5; border-top-color: #bbb; border-radius: 3px; box-shadow: 0 3px 8px rgba(0,0,0,.3); color: #41484b; }
.alert h1 { margin: 0; font-size: 18px; font-weight: 400; line-height: 30px; letter-spacing: -.18px; }
.alert p { font-size: 15px; line-height: 30px; margin-top: 6px; letter-spacing: -.05px; }
.alert button { position: absolute; right: 19px; bottom: 19px; width: 80px; height: 40px; border-radius: 20px; background: #fb542b; color: #fff; font-size: 14px; font-weight: 600; }

/* Screen sharing bar */
.share { position: absolute; left: 494px; top: 966px; width: 933px; height: 54px; display: flex; align-items: center; padding-left: 12px; background: #fff; border: 1px solid #cfd3d3; box-shadow: 0 2px 4px rgba(0,0,0,.25); font-size: 14.5px; letter-spacing: -.26px; color: #5d6365; white-space: nowrap; }
.grip { width: 8px; height: 14px; border: solid #d0d3d3; border-width: 0 3px; margin-right: 12px; }
.share-text { width: 656px; }
.share button { width: 159px; height: 39px; border-radius: 20px; background: #fb5c32; color: #fff; font-weight: 600; }
.share a { margin-left: 12px; color: #d9603f; text-decoration: underline; letter-spacing: -.4px; }

.cursor { position: absolute; left: 1148px; top: 851px; width: 18px; height: 24px; fill: #fff; stroke: #1b1b2b; stroke-width: 1.3; }
```
